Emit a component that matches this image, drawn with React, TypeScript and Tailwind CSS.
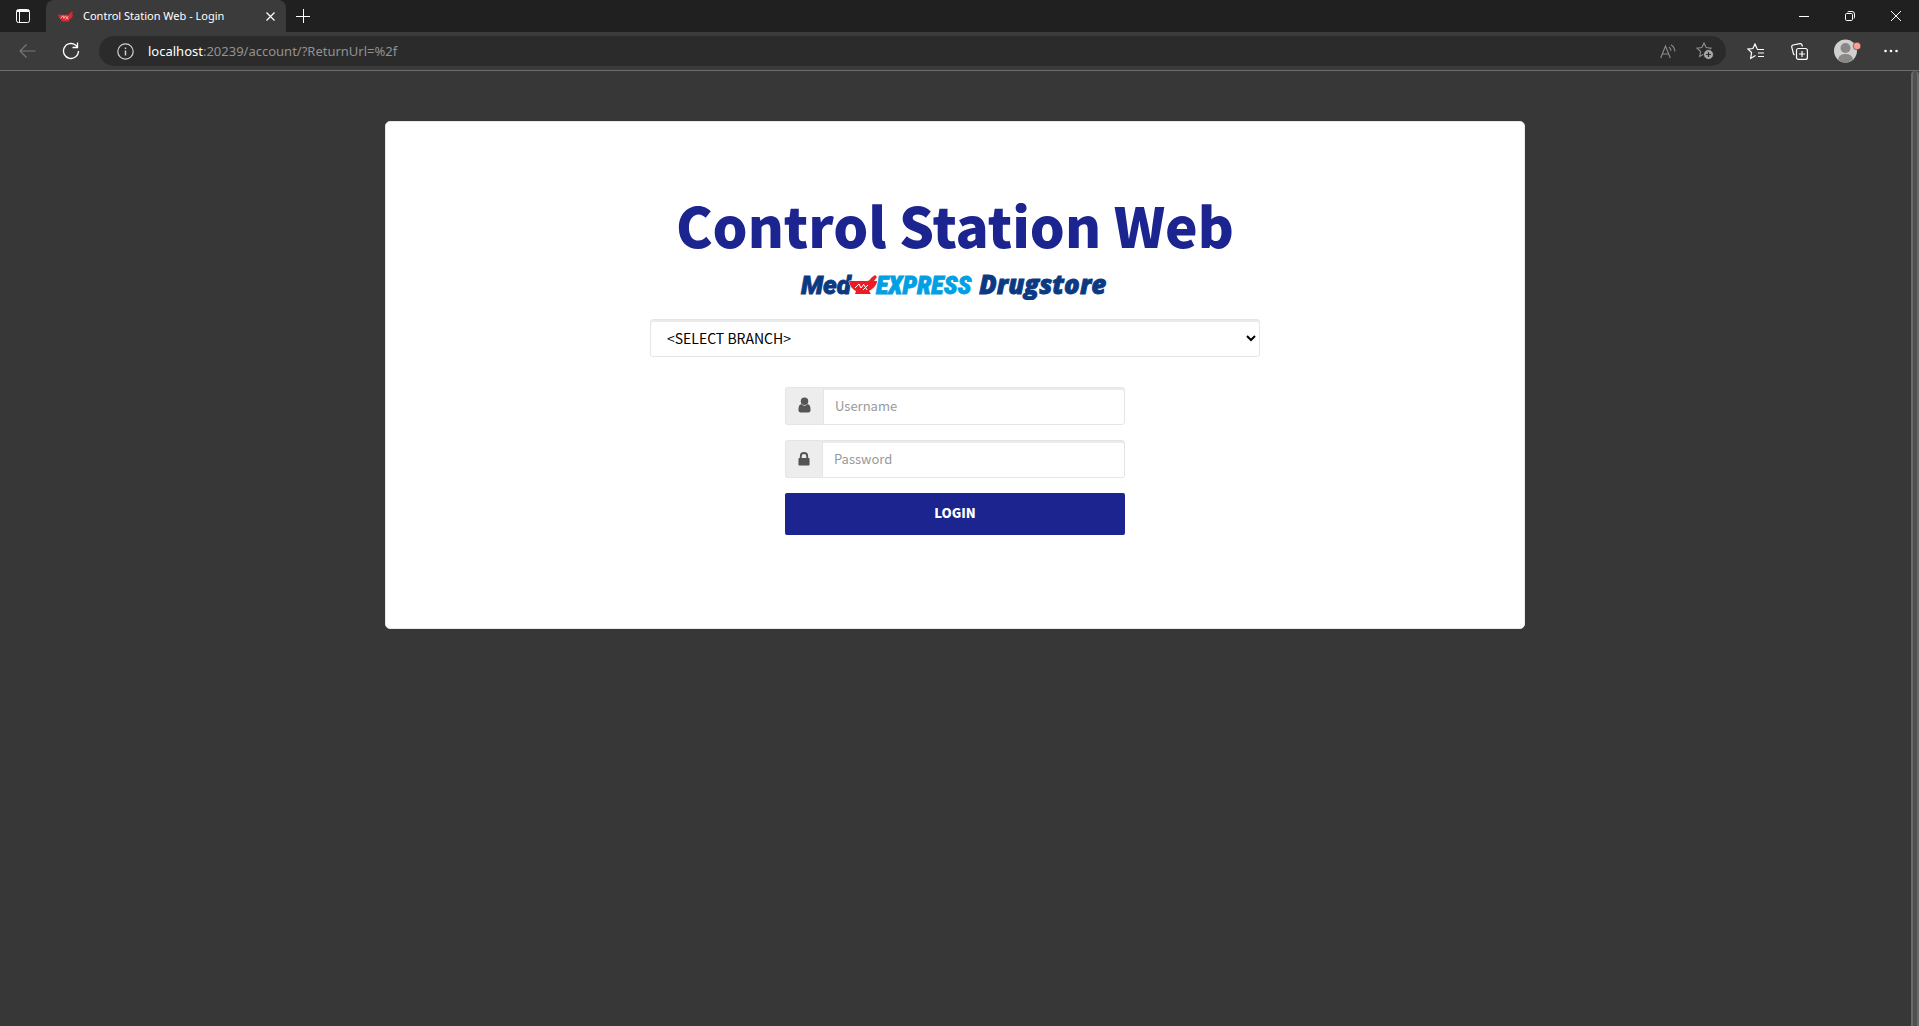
import type { ReactNode } from "react";

const mortarBowl = "M0 6 H18 C20 6 21 5 22 3 L26 0 L28 2 L25 6 H28 L28 7 C27 11 24 14 20 16 L22 19 H6 L7 16 C3 14 1 11 0 6 Z";

function Mortar({ className }: { className: string }) {
  return (
    <svg viewBox="0 0 28 19" className={className} aria-hidden="true">
      <path d={mortarBowl} fill="#d8292f" />
      <path d="M5 13 L9 8 L11 13 L14 8 M15 9 L19 15 M19 9 L14 15" fill="none" stroke="#fff" strokeWidth="1.2" />
    </svg>
  );
}

function IconButton({ label, className, children }: { label: string; className: string; children: ReactNode }) {
  return (
    <button type="button" aria-label={label} className={`flex shrink-0 items-center justify-center ${className}`}>
      {children}
    </button>
  );
}

function TabStrip() {
  return (
    <div className="flex h-8 items-stretch bg-[#202020] text-white">
      <IconButton label="Tab actions" className="w-[46px]">
        <svg width="14" height="14" viewBox="0 0 14 14" fill="none" stroke="currentColor">
          <rect x=".5" y=".5" width="13" height="13" rx="2" />
          <path d="M1 2.5H13M1 1.5H13M3.5 3V13" />
        </svg>
      </IconButton>
      <div className="flex w-60 items-center rounded-t-lg bg-[#3b3b3b] pr-2 pl-3">
        <Mortar className="h-[11px] w-[15px]" />
        <span className="ml-2.5 flex-1 font-['Noto_Sans',sans-serif] text-[11px] whitespace-nowrap">
          Control Station Web - Login
        </span>
        <IconButton label="Close tab" className="size-4">
          <svg width="9" height="9" viewBox="0 0 9 9" stroke="currentColor" strokeWidth="1.2">
            <path d="M.5 .5L8.500 8.500M8.500 .5L.5 8.500" />
          </svg>
        </IconButton>
      </div>
      <IconButton label="New tab" className="w-[34px]">
        <svg width="14" height="14" viewBox="0 0 14 14" stroke="currentColor">
          <path d="M0 7.500H14M7.500 0V14" />
        </svg>
      </IconButton>
      <div className="flex-1" />
      <IconButton label="Minimize" className="w-[46px]">
        <svg width="10" height="10" viewBox="0 0 10 10" stroke="currentColor">
          <path d="M0 5.500H10" />
        </svg>
      </IconButton>
      <IconButton label="Restore" className="w-[46px]">
        <svg width="10" height="10" viewBox="0 0 10 10" fill="none" stroke="currentColor">
          <rect x=".5" y="2.500" width="7" height="7" rx="1.200" />
          <path d="M2.500 1Q3 .5 4 .5H7Q9.500 .5 9.500 3V6.500Q9.500 7 9 7.500" />
        </svg>
      </IconButton>
      <IconButton label="Close" className="w-[46px]">
        <svg width="10" height="10" viewBox="0 0 10 10" stroke="currentColor">
          <path d="M0 0L10 10M10 0L0 10" />
        </svg>
      </IconButton>
    </div>
  );
}

const star = "M8 1L10.100 5.500L15 6.100L11.400 9.500L12.300 14.400L8 12L3.700 14.400L4.600 9.500L1 6.100L5.900 5.500Z";

function Toolbar() {
  return (
    <div className="flex h-[39px] items-center border-b border-[#6b6e6d] bg-[#3b3b3b] pr-[18px] text-white">
      <IconButton label="Back" className="ml-4 w-[22px] text-[#7b7b7b]">
        <svg width="17" height="14" viewBox="0 0 17 14" fill="none" stroke="currentColor" strokeWidth="1.100">
          <path d="M7.500 .5L1 7L7.500 13.500M1 7H16.500" />
        </svg>
      </IconButton>
      <IconButton label="Refresh" className="ml-[22px] w-[22px]">
        <svg width="18" height="18" viewBox="0 0 18 18" fill="none" stroke="currentColor" strokeWidth="1.300">
          <path d="M16.500 9A7.500 7.500 0 1 1 13.500 3L15.500 5M15.500 .5V5.500H10.500" />
        </svg>
      </IconButton>
      <div className="ml-[17px] flex h-[30px] flex-1 items-center rounded-full bg-[#2b2b2b] pr-3 pl-[17px]">
        <IconButton label="Site information" className="w-[18px] text-[#d0d0d0]">
          <svg width="17" height="17" viewBox="0 0 17 17" fill="none" stroke="currentColor" strokeWidth="1.200">
            <circle cx="8.500" cy="8.500" r="7.700" />
            <path d="M8.500 7.500V12.500M8.500 4.500V6" strokeWidth="1.500" />
          </svg>
        </IconButton>
        <a href="#" className="ml-[14px] flex-1 pt-0.5 font-['Noto_Sans',sans-serif] text-[13px] whitespace-nowrap text-[#929292]">
          <span className="text-white">localhost</span>:20239/account/?ReturnUrl=%2f
        </a>
        <IconButton label="Read aloud" className="w-4 text-[#8c8c8c]">
          <svg width="16" height="15" viewBox="0 0 16 15" fill="none" stroke="currentColor" strokeWidth="1.100">
            <path d="M.7 14L5.500 2L10.300 14M2.300 10H8.700M9 3Q11 4.500 11 7M11 .7Q14.800 3 14.800 7.500" />
          </svg>
        </IconButton>
        <IconButton label="Add to favorites" className="ml-5 w-[18px] text-[#a0a0a0]">
          <svg width="18" height="18" viewBox="0 0 18 18" fill="none">
            <path d={star} stroke="#8c8c8c" strokeWidth="1.100" />
            <circle cx="12.500" cy="12.500" r="5" fill="#a6a6a6" stroke="#2b2b2b" />
            <path d="M12.500 10V15M10 12.500H15" stroke="#2b2b2b" strokeWidth="1.200" />
          </svg>
        </IconButton>
      </div>
      <IconButton label="Favorites" className="ml-5 w-[18px]">
        <svg width="17" height="17" viewBox="0 0 17 17" fill="none" stroke="currentColor" strokeWidth="1.200">
          <path d="M10.200 6L8 1L5.900 5.500L1 6.100L4.600 9.500L3.700 15.400L8.500 12.500M10 6.500H17M11 10H17M11 13.500H17" />
        </svg>
      </IconButton>
      <IconButton label="Collections" className="ml-[26px] w-[18px]">
        <svg width="17" height="17" viewBox="0 0 17 17" fill="none" stroke="currentColor" strokeWidth="1.200">
          <rect x="5.500" y="5.500" width="10.900" height="10.900" rx="2" />
          <path d="M11 8V14M8 11H14M3.500 12L2.500 11L.7 4Q.5 2.500 2 2L9 .6Q10.500 .5 11 2L11.500 3.500" />
        </svg>
      </IconButton>
      <IconButton label="Profile" className="ml-[26px] w-[27px]">
        <svg width="27" height="24" viewBox="0 0 27 24">
          <circle cx="11.500" cy="12" r="11.500" fill="#d2d0ce" />
          <circle cx="11.500" cy="9" r="5" fill="#8a8886" />
          <path d="M4 20.500Q5 15 11.500 15T19 20.500A11.500 11.500 0 0 1 4 20.500Z" fill="#8a8886" />
          <circle cx="23" cy="7" r="3.800" fill="#ff9d95" stroke="#3b3b3b" strokeWidth=".6" />
        </svg>
      </IconButton>
      <IconButton label="Settings and more" className="ml-5 w-5">
        <svg width="14" height="4" viewBox="0 0 14 4" fill="currentColor">
          <circle cx="1.500" cy="2" r="1.300" />
          <circle cx="7" cy="2" r="1.300" />
          <circle cx="12.500" cy="2" r="1.300" />
        </svg>
      </IconButton>
    </div>
  );
}

function BrandLogo() {
  return (
    <svg width="316" height="30" viewBox="0 0 316 30" role="img" aria-label="MedExpress Drugstore" className="mx-auto block">
      <g fontFamily="Roboto,sans-serif" fontWeight="900" fontStyle="italic" strokeWidth=".8">
        <text x="4" y="24" fontSize="26" fill="#0b3a82" stroke="#0b3a82">Med</text>
        <text x="79" y="24" fontSize="26" fill="#00a0e3" stroke="#00a0e3" fontFamily="'Liberation Sans Narrow','Roboto Condensed',sans-serif">EXPRESS</text>
        <text x="182" y="24" fontSize="26" fill="#0b3a82" stroke="#0b3a82" fontFamily="'Open Sans',sans-serif" fontWeight="800">Drugstore</text>
      </g>
      <g transform="translate(52 5)">
        <path d={mortarBowl} fill="#ed1c24" stroke="#fff" strokeWidth="1" paintOrder="stroke" />
        <path d="M6 13 L10 9 L12 13 L15 9 M15 10 L18 15 M19 10 L14 15" fill="none" stroke="#fff" />
      </g>
    </svg>
  );
}

const fieldBox = "border border-[#e5e5e5] shadow-[inset_0_2px_0_#ebebeb]";

function Field({ id, label, type, icon }: { id: string; label: string; type: string; icon: ReactNode }) {
  return (
    <div className="flex h-[38px]">
      <label htmlFor={id} aria-label={label} className="flex items-center rounded-l-[3px] border border-r-0 border-[#e5e5e5] bg-[#ededed] px-3 pb-0.5 text-[#555]">
        {icon}
      </label>
      <input
        id={id}
        type={type}
        placeholder={label}
        className={`min-w-0 flex-1 rounded-r-[3px] bg-white px-[11px] text-[13px] text-[#555] outline-none placeholder:text-[#999] ${fieldBox}`}
      />
    </div>
  );
}

function LoginCard() {
  return (
    <main className="mx-auto w-full max-w-[1140px] rounded-[5px] border border-[#e8eaea] bg-white pt-[60px] pb-[93px]">
      <form className="mx-auto max-w-[610px]" onSubmit={(e) => e.preventDefault()}>
        <h1 className="pb-1 text-center text-[55px] leading-[84px] font-black whitespace-nowrap text-[#1c2490]">Control Station Web</h1>
        <BrandLogo />
        <select aria-label="Branch" className={`mt-[19px] block h-[38px] w-full rounded-[3px] bg-white px-3 text-[14px] text-black ${fieldBox}`}>
          <option>&lt;SELECT BRANCH&gt;</option>
        </select>
        <div className="mx-auto mt-[30px] flex max-w-[340px] flex-col gap-[15px]">
          <Field
            id="username"
            label="Username"
            type="text"
            icon={
              <svg width="13" height="16" viewBox="0 0 14 16" fill="currentColor">
                <circle cx="7" cy="4" r="4" />
                <path d="M3.500 7Q7 10.500 10.500 7Q13.500 8 13.500 13Q13.500 16 11 16H3Q.5 16 .5 13Q.5 8 3.500 7Z" />
              </svg>
            }
          />
          <Field
            id="password"
            label="Password"
            type="password"
            icon={
              <svg width="12" height="15" viewBox="0 0 13 15" fill="currentColor">
                <path d="M2 7V5Q2 .5 6.500 .5T11 5V7H12Q12.500 7 12.500 8V14Q12.500 15 11.500 15H1.500Q.5 15 .5 14V8Q.5 7 1.500 7ZM4 7H9V5Q9 2.500 6.500 2.500T4 5Z" />
              </svg>
            }
          />
          <button type="submit" className="h-[42px] rounded-[2px] bg-[#1c2490] pb-0.5 text-[13px] font-black text-white">
            LOGIN
          </button>
        </div>
      </form>
    </main>
  );
}

export default function App() {
  return (
    <div className="flex min-h-screen flex-col bg-[#373737] font-['Noto_Sans_CJK_SC',sans-serif]">
      <TabStrip />
      <Toolbar />
      <div className="flex flex-1">
        <div className="flex-1 pt-[50px]">
          <LoginCard />
        </div>
        <div className="flex w-[9px] justify-end">
          <div className="w-2 rounded-t-full border-x-2 border-[#6a6a6a] bg-[#505050]" />
        </div>
      </div>
    </div>
  );
}
